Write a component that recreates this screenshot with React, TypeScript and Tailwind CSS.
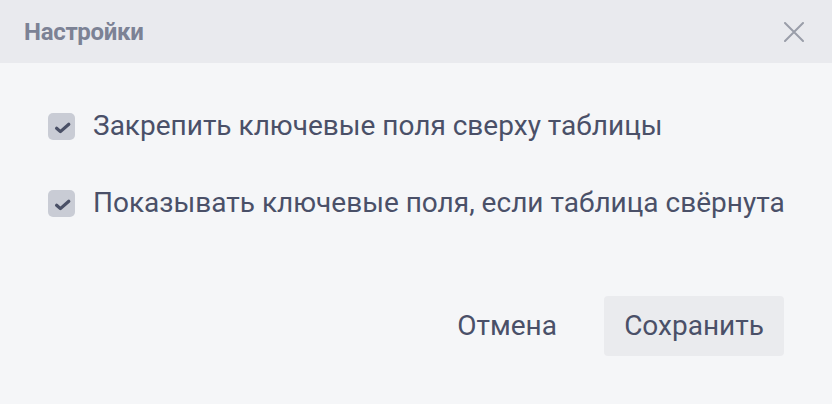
import React from "react";

function Check() {
  return (
    <div className="w-[27px] h-[27px] rounded-[5px] bg-[#c9ccd5] shrink-0">
      <svg width="27" height="27" viewBox="0 0 27 27">
        <path d="M8.6 15.2 L12.4 18.6 L20.8 11.2" fill="none" stroke="#4a5066" strokeWidth="3.2" strokeLinecap="round" strokeLinejoin="round" />
      </svg>
    </div>
  );
}

export default function App() {
  return (
    <div className="w-[832px] h-[404px] bg-[#f5f6f8] flex flex-col" style={{ fontFamily: "Roboto, 'Noto Sans', sans-serif" }}>
      <div className="h-[63px] bg-[#e9eaee] flex items-center justify-between pl-6 pr-7">
        <div className="text-[24px] font-bold text-[#7c8295] tracking-[-0.3px]">Настройки</div>
        <svg width="20" height="20" viewBox="0 0 20 20">
          <path d="M1 1 L19 19 M19 1 L1 19" stroke="#9a9ea9" strokeWidth="2" strokeLinecap="round" />
        </svg>
      </div>
      <div className="flex flex-col gap-[49px] pl-12 pt-[49px]">
        <div className="flex items-center gap-[18px]">
          <Check />
          <span className="text-[28px] text-[#4a5068] leading-none">Закрепить ключевые поля сверху таблицы</span>
        </div>
        <div className="flex items-center gap-[18px]">
          <Check />
          <span className="text-[28px] text-[#4a5068] leading-none">Показывать ключевые поля, если таблица свёрнута</span>
        </div>
      </div>
      <div className="flex justify-end items-center gap-[47px] pr-12 mt-[79px]">
        <button className="text-[28px] text-[#4a5068]">Отмена</button>
        <button className="w-[180px] h-[60px] rounded-[4px] bg-[#eaebee] text-[28px] text-[#4a5068]">Сохранить</button>
      </div>
    </div>
  );
}
